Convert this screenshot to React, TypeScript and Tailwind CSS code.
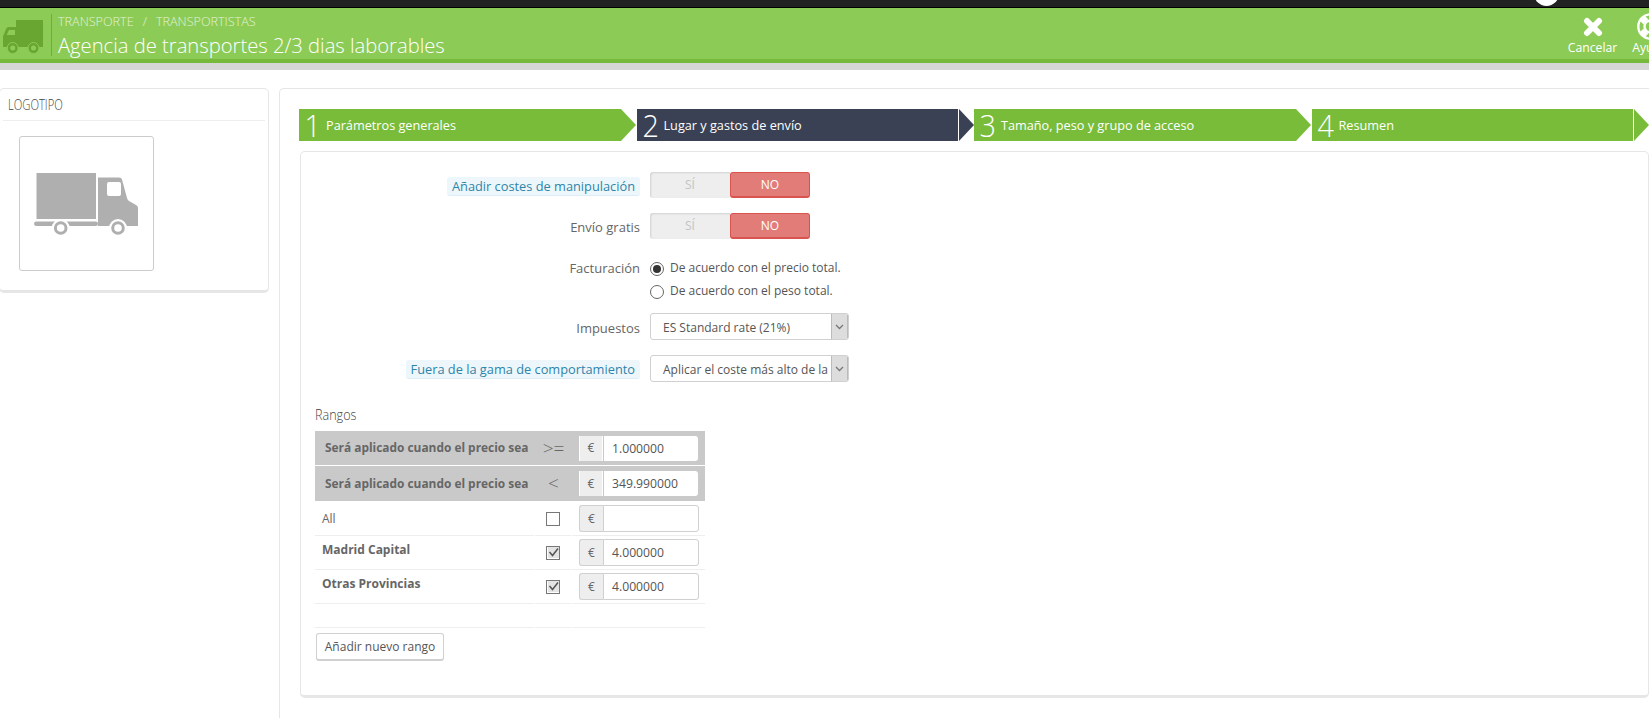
const font = "font-['Open_Sans',sans-serif]";

function HeaderTruck() {
  return (
    <svg width="40" height="34" viewBox="0 0 40 34" className="shrink-0">
      <rect x="13" y="0" width="27" height="26" fill="#69a631" />
      <path d="M13 7H5.500Q4 7 3 9L1 14L0 16V27H40V25H13Z" fill="#69a631" />
      <path d="M6 10H12V15H3.700Z" fill="#8dcb57" />
      <circle cx="9.700" cy="28" r="5.500" fill="#69a631" stroke="#8dcb57" strokeWidth="1" />
      <circle cx="9.700" cy="28" r="2.500" fill="#8dcb57" />
      <circle cx="30.500" cy="28" r="5.500" fill="#69a631" stroke="#8dcb57" strokeWidth="1" />
      <circle cx="30.500" cy="28" r="2.500" fill="#8dcb57" />
    </svg>
  );
}

function LogoTruck() {
  return (
    <svg width="104" height="64" viewBox="0 0 104 64" className="mt-[3px] mr-[2px]">
      <rect x="2.500" y="0" width="59.500" height="46" fill="#afafaf" />
      <path d="M64 4.500H85Q87.500 4.500 88 6.500L93 25Q93.500 27 95 28L102 32Q104 33 104 35V53H64Z" fill="#afafaf" />
      <rect x="0" y="48.500" width="64" height="4.500" rx="2.200" fill="#afafaf" />
      <rect x="73" y="9" width="14" height="14" rx="2" fill="#fff" />
      <circle cx="26.700" cy="55" r="9" fill="#fff" />
      <circle cx="26.700" cy="55" r="5.300" fill="none" stroke="#afafaf" strokeWidth="3" />
      <circle cx="84" cy="55" r="9" fill="#fff" />
      <circle cx="84" cy="55" r="5.300" fill="none" stroke="#afafaf" strokeWidth="3" />
    </svg>
  );
}

function LifeRing() {
  return (
    <svg width="27" height="27" viewBox="0 0 27 27" className="shrink-0">
      <circle cx="13.500" cy="13.500" r="12.200" fill="none" stroke="#fff" strokeWidth="2.400" />
      <circle cx="13.500" cy="13.500" r="6" fill="none" stroke="#fff" strokeWidth="2.400" />
      <path
        d="M8.800 8.800L4.800 4.800M18.200 8.800L22.200 4.800M8.800 18.200L4.800 22.200M18.200 18.200L22.200 22.200"
        fill="none"
        stroke="#fff"
        strokeWidth="7"
      />
    </svg>
  );
}

function Step({ n, label, active, line }: { n: number; label: string; active?: boolean; line?: boolean }) {
  return (
    <div className="flex w-[337.500px] shrink-0">
      <div
        className={`flex h-8 w-[322px] items-center text-white ${active ? "bg-[#3a4155]" : "bg-[#79bc3a]"} ${line ? "border-r border-white" : ""}`}
      >
        <span className="w-[27px] origin-left scale-x-90 pl-[6px] text-[32px] leading-8 font-light">{n}</span>
        <span className="text-[12.700px] leading-8">{label}</span>
      </div>
      <div
        className={`h-0 w-0 border-y-[16px] border-l-[15px] border-y-transparent ${active ? "border-l-[#3a4155]" : "border-l-[#79bc3a]"}`}
      />
    </div>
  );
}

function Toggle() {
  return (
    <div className="flex h-[26px] w-[160px] text-[12px] leading-[26px]">
      <div className="w-[80px] rounded-l-[3px] bg-[#eeeeee] text-center text-[#c4c4c4] shadow-[inset_1px_1px_2px_rgba(0,0,0,0.12)]">SÍ</div>
      <div className="w-[80px] rounded-[3px] border border-b-2 border-[#d9534f] bg-[#e27c79] text-center leading-[23px] text-white">NO</div>
    </div>
  );
}

function FormRow({ label, hint, className, children }: { label: string; hint?: boolean; className?: string; children: React.ReactNode }) {
  return (
    <div className={`flex items-center ${className ?? ""}`}>
      <div className="flex w-[339px] shrink-0 justify-end pt-[2px]">
        {hint ? (
          <span className="rounded-[3px] border-b border-[#dcedf5] bg-[#edf7fb] px-[5px] text-[12.800px] leading-[18px] text-[#2d84aa]">{label}</span>
        ) : (
          <span className="text-[13px] leading-[18px] text-[#666666]">{label}</span>
        )}
      </div>
      <div className="ml-[10px]">{children}</div>
    </div>
  );
}

function Radio({ checked, label }: { checked?: boolean; label: string }) {
  return (
    <div className="flex h-[23px] items-center text-[12px] text-[#555555]">
      <span className="flex h-[14px] w-[14px] items-center justify-center rounded-full border border-[#666666] bg-white">
        {checked ? <span className="h-2 w-2 rounded-full bg-[#333333]" /> : null}
      </span>
      <span className="ml-[6px] -translate-y-px">{label}</span>
    </div>
  );
}

function Select({ value }: { value: string }) {
  return (
    <div className="flex h-[27px] w-[199px] overflow-hidden rounded-[3px] border border-[#d0d0d0] bg-white text-[12px] text-[#555555]">
      <span className="flex-1 overflow-hidden pt-px pl-3 leading-[25px] whitespace-nowrap">{value}</span>
      <span className="flex w-[17px] shrink-0 items-center justify-center border-x border-[#bbbbbb] bg-[#dddddd]">
        <svg width="9" height="6" viewBox="0 0 9 6">
          <path d="M1 1L4.500 4.500L8 1" fill="none" stroke="#777777" strokeWidth="1.300" />
        </svg>
      </span>
    </div>
  );
}

function HeadRow({ op, value, tall }: { op: string; value: string; tall?: boolean }) {
  return (
    <div className={`flex border-b border-white bg-[#c9c9c9] text-[#666666] ${tall ? "h-[36px]" : "h-[35px]"}`}>
      <div className="flex w-[220px] items-center pl-[10px] text-[11.900px] font-bold whitespace-nowrap">Será aplicado cuando el precio sea</div>
      <div className="flex w-[37px] items-center justify-center text-[19px] font-light">{op}</div>
      <div className="flex w-[133px] items-center pl-[7px]">
        <span className="flex h-[25px] w-[24px] items-center justify-center border-x border-white bg-[#eeeeee] text-[12px]">€</span>
        <span className="ml-px h-[25px] w-[94px] rounded-r-[3px] bg-white pl-2 text-[12.200px] leading-[25px] text-[#555555]">{value}</span>
      </div>
    </div>
  );
}

function ZoneRow({ label, bold, checked, value }: { label: string; bold?: boolean; checked?: boolean; value: string }) {
  return (
    <div className="flex h-[34px] gap-px text-[#666666]">
      <div className={`w-[219px] border-b border-[#eeeeee] pl-[7px] text-[12px] ${bold ? "pt-[5px] font-bold" : "pt-[8px] font-normal"}`}>{label}</div>
      <div className="flex w-[36px] items-center justify-center border-b border-[#eeeeee]">
        <span className="flex h-[14px] w-[14px] items-center justify-center border-[1.500px] border-[#777777] bg-white">
          {checked ? (
            <svg width="11" height="11" viewBox="0 0 11 11" className="bg-[#e4e4e4]">
              <path d="M1.500 5L4.500 8.500L10 1.500" fill="none" stroke="#555555" strokeWidth="1.500" />
            </svg>
          ) : null}
        </span>
      </div>
      <div className="flex w-[133px] items-center border-b border-[#eeeeee] pl-[7px]">
        <span className="flex h-[27px] w-[24px] items-center justify-center rounded-l-[3px] border border-r-0 border-[#d0d0d0] bg-[#eeeeee] text-[12px]">€</span>
        <span className="h-[27px] w-[96px] rounded-r-[3px] border border-[#d0d0d0] bg-white pl-2 text-[12.200px] leading-[25px] text-[#555555]">{value}</span>
      </div>
    </div>
  );
}

export default function App() {
  return (
    <div className={`h-[718px] w-[1649px] overflow-hidden bg-white ${font}`}>
      <div className="relative h-2 overflow-hidden border-b border-black bg-[#222222]">
        {/* cursor blob sitting in the top bar */}
        <div className="absolute top-[-19px] left-[1534px] h-[25px] w-[25px] rounded-full bg-white" />
      </div>

      <header className="flex h-[55px] items-stretch overflow-hidden border-b-4 border-[#77b93b] bg-[#8dcb57] pl-[3px]">
        <div className="mt-3">
          <HeaderTruck />
        </div>
        <div className="mt-[6px] mb-[3px] ml-2 border-l border-[#72ac3e]" />
        <div className="ml-[6px] flex flex-col">
          <div className="mt-[6px] flex h-4 items-center text-[12.600px] leading-4 font-light text-[#e2f2d2]">
            <span>TRANSPORTE</span>
            <span className="mx-[9px]">/</span>
            <span>TRANSPORTISTAS</span>
          </div>
          <h1 className="mt-[2px] text-[20.200px] leading-[27px] font-light whitespace-nowrap text-white">Agencia de transportes 2/3 dias laborables</h1>
        </div>
        <div className="mr-[-26px] ml-auto flex text-[12.200px] leading-4 text-white">
          <div className="flex w-[65px] flex-col items-center pt-[9px]">
            <svg width="20" height="20" viewBox="0 0 20 20">
              <path d="M4 4L16 16M16 4L4 16" stroke="#fff" strokeWidth="6" strokeLinecap="round" />
            </svg>
            <span className="mt-[3px]">Cancelar</span>
          </div>
          <div className="flex w-[50px] flex-col items-center pt-[5px]">
            <LifeRing />
            <span>Ayuda</span>
          </div>
        </div>
      </header>

      <div className="h-[7px] bg-[#d6d6d6]" />

      <main className="mt-[18px] flex h-[630px]">
        <aside className="ml-[-1px] h-[205px] w-[270px] shrink-0 rounded-[5px] border border-b-[3px] border-[#e6e6e6] px-[3px]">
          <div className="flex h-8 items-center border-b border-[#eeeeee] pb-px pl-[5px] text-[14px] text-[#444444]">
            <span className="origin-left scale-x-[0.8] font-light">LOGOTIPO</span>
          </div>
          <div className="mt-[15px] ml-4 flex h-[135px] w-[135px] items-center justify-center rounded-[3px] border border-[#cccccc]">
            <LogoTruck />
          </div>
        </aside>

        <section className="ml-[10px] flex-1 rounded-tl-[5px] border-t border-l border-[#e6e6e6] pt-5 pl-[19px]">
          <div className="flex">
            <Step n={1} label="Parámetros generales" />
            <Step n={2} label="Lugar y gastos de envío" active line />
            <Step n={3} label="Tamaño, peso y grupo de acceso" />
            <Step n={4} label="Resumen" line />
          </div>

          <div className="mt-[10px] ml-px h-[547px] rounded-[5px] border border-b-[3px] border-[#e6e6e6] pt-5">
            <FormRow label="Añadir costes de manipulación" hint>
              <Toggle />
            </FormRow>
            <FormRow label="Envío gratis" className="mt-[15px]">
              <Toggle />
            </FormRow>
            <div className="mt-[18px] flex">
              <div className="w-[339px] pt-[2px] text-right text-[13px] leading-[18px] text-[#666666]">Facturación</div>
              <div className="ml-[10px]">
                <Radio checked label="De acuerdo con el precio total." />
                <Radio label="De acuerdo con el peso total." />
              </div>
            </div>
            <FormRow label="Impuestos" className="mt-[10px]">
              <Select value="ES Standard rate (21%)" />
            </FormRow>
            <FormRow label="Fuera de la gama de comportamiento" hint className="mt-[15px]">
              <Select value="Aplicar el coste más alto de la" />
            </FormRow>

            <div className="mt-[24px] ml-[14px] w-[390px]">
              <div className="h-[18px] text-[15px] leading-[16px] font-light text-[#444444]">
                <span className="inline-block origin-left scale-x-[0.84]">Rangos</span>
              </div>
              <div className="mt-[7px]">
                <HeadRow op=">=" value="1.000000" />
                <HeadRow op="<" value="349.990000" tall />
                <ZoneRow label="All" value="" />
                <ZoneRow label="Madrid Capital" bold checked value="4.000000" />
                <ZoneRow label="Otras Provincias" bold checked value="4.000000" />
                <div className="flex h-[24px] gap-px">
                  <div className="w-[219px] border-b border-[#eeeeee]" />
                  <div className="w-[36px] border-b border-[#eeeeee]" />
                  <div className="w-[133px] border-b border-[#eeeeee]" />
                </div>
              </div>
              <button
                type="button"
                className="mt-[5px] ml-px h-[28px] w-[128px] rounded-[3px] border border-b-2 border-[#d0d0d0] bg-white text-[12px] text-[#555555]"
              >
                Añadir nuevo rango
              </button>
            </div>
          </div>
        </section>
      </main>
    </div>
  );
}
